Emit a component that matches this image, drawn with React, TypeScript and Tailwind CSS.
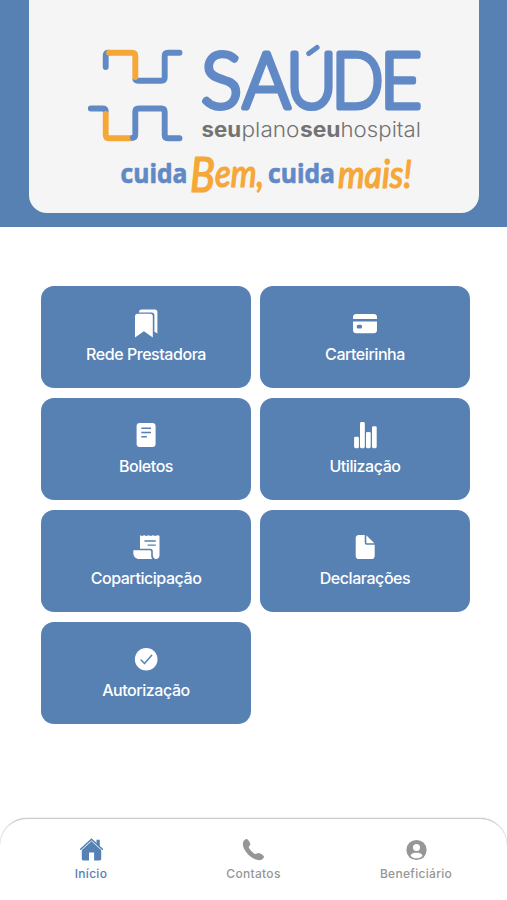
import type { ReactNode } from 'react'

interface MenuItem {
  label: string
  icon: ReactNode
}

interface TabItem {
  label: string
  icon: ReactNode
  active?: boolean
}

const menuItems: MenuItem[] = [
  {
    label: 'Rede Prestadora',
    icon: (
      <>
        <path d="M8 5.2C8 3.6 9.1 2.6 10.400 2.6H24c1.400 0 2.400 1 2.400 2.400V26.600l-3-1.800V8.400c0-1.600-1-2.800-2.800-2.800H8z" fill="white" />
        <path d="M4 9.200C4 7.700 5 6.800 6.400 6.800H19.400C20.900 6.800 21.800 7.700 21.800 9.200V30.600L12.900 24.200L4 30.600Z" fill="white" />
      </>
    ),
  },
  {
    label: 'Carteirinha',
    icon: (
      <>
        <path d="M3 11.900V10C3 8 4.400 7 6.100 7H23.900C25.600 7 27 8 27 10V11.900Z" fill="white" />
        <path
          fillRule="evenodd"
          d="M3 14.500H27V23.200C27 25 25.600 26.200 23.900 26.200H6.100C4.400 26.200 3 25 3 23.200ZM8.400 17.700C6.200 17.700 6.200 21.500 8.400 21.500H10.500C12.700 21.500 12.700 17.700 10.500 17.700Z"
          fill="white"
        />
      </>
    ),
  },
  {
    label: 'Boletos',
    icon: (
      <>
        <rect x="5.600" y="3.900" width="19" height="24.100" rx="3.200" fill="white" />
        <path d="M10.300 9.300H20M10.300 13.500H20M10.300 17.700H15.800" stroke="#5780b3" strokeWidth="1.500" />
      </>
    ),
  },
  {
    label: 'Utilização',
    icon: (
      <>
        <rect x="4.100" y="17.800" width="4.800" height="11.400" rx="1.400" fill="white" />
        <rect x="10" y="3" width="4.800" height="26.200" rx="1.400" fill="white" />
        <rect x="16" y="12.900" width="4.700" height="16.300" rx="1.400" fill="white" />
        <rect x="22" y="7.200" width="4.700" height="22" rx="1.400" fill="white" />
      </>
    ),
  },
  {
    label: 'Coparticipação',
    icon: (
      <>
        <path
          d="M9 4.200L11 5.100L13.200 4.200L15.400 5.100L17.600 4.200L19.800 5.100L22 4.200L24.200 5.100L26.400 4.200L28.500 4.800V24C28.500 26.800 27 28 25.200 28C23 28 21.800 26.500 21.800 24.100V20.200C21.800 18.600 20.900 17.700 19.200 17.700H9Z"
          fill="white"
        />
        <path d="M2.300 19.200H18.600C19.700 19.200 20.200 19.700 20.200 20.800V24.500C20.200 26.100 20.600 27.200 21.400 28H8.500C4.500 28 2.300 25.500 2.300 21.500Z" fill="white" />
        <path d="M13.500 10H24.800M16.600 14.100H24.800" stroke="#5780b3" strokeWidth="1.400" />
      </>
    ),
  },
  {
    label: 'Declarações',
    icon: (
      <>
        <path
          d="M14.700 4V11.200C14.700 13 15.600 13.800 17.300 13.800H24.700V24.900C24.700 26.900 23.400 28 21.500 28H8.900C7 28 5.700 26.900 5.700 24.900V7.100C5.700 5.100 7 4 8.900 4Z"
          fill="white"
        />
        <path d="M16.300 4.200L24.400 12.300H17.300C16.600 12.300 16.300 12 16.300 11.300Z" fill="white" />
      </>
    ),
  },
  {
    label: 'Autorização',
    icon: (
      <>
        <circle cx="15.200" cy="16.300" r="11.300" fill="white" />
        <path d="M10.100 17L13.500 20.600L20.700 12.300" fill="none" stroke="#5780b3" strokeWidth="1.500" strokeLinecap="round" strokeLinejoin="round" />
      </>
    ),
  },
]

const tabItems: TabItem[] = [
  {
    label: 'Início',
    active: true,
    icon: (
      <>
        <path d="M2.800 12.200L12.500 3.500L22.200 12.200V22C22.200 22.900 21.700 23.400 20.800 23.400H15.100V15.500H10V23.400H4.300C3.300 23.400 2.800 22.900 2.800 22Z" fill="currentColor" />
        <path d="M17.500 2.800H20.800V9.500L17.500 6.500Z" fill="currentColor" />
        <path d="M2.300 13.200L12.500 3.900L22.700 13.200" fill="none" stroke="white" strokeWidth="0.800" />
        <path d="M1.600 12.200L12.500 2.300L23.400 12.200" fill="none" stroke="currentColor" strokeWidth="1.500" strokeLinecap="round" />
      </>
    ),
  },
  {
    label: 'Contatos',
    icon: (
      <path
        d="M2.400 4.500C3.500 2.500 5.200 1.600 6.500 2.400C7.500 3 9.200 5.500 9.300 6.900C9.400 8.500 7.800 9 7.800 10.200C7.800 11.500 12.400 16.700 14.300 16.900C15.700 17 16.300 15.800 17.700 15.900C19.300 16 22.400 18.100 22.900 19.300C23.400 20.700 21.400 22.900 19.400 23.100C11.300 23.900 1.100 13.100 1.900 6.200C2 5.600 2.100 5.100 2.400 4.500Z"
        fill="currentColor"
      />
    ),
  },
  {
    label: 'Beneficiário',
    icon: (
      <>
        <circle cx="12.500" cy="13" r="10.100" fill="currentColor" />
        <circle cx="12.500" cy="10.600" r="3.500" fill="white" />
        <path d="M6.500 18.700C7.200 16.200 10 15.700 12.500 15.700S17.800 16.200 18.500 18.700C16.900 20.500 14.800 21.300 12.500 21.300S8.100 20.500 6.500 18.700Z" fill="white" />
      </>
    ),
  },
]

function Logo() {
  return (
    <svg className="block h-[212px] w-[450px]" viewBox="29 0 450 212" role="img" aria-label="Saúde">
      <defs>
        <clipPath id="cap-height">
          <path d="M195 48H300V57H324V48H430V115H195Z" />
        </clipPath>
      </defs>
      <g fill="none" strokeWidth="5.900" strokeLinecap="round" strokeLinejoin="round">
        <path d="M105.700 67V55.500Q105.700 52.700 108.500 52.700" stroke="#6189c6" />
        <path d="M135.500 79.500Q136 80.700 138.500 80.700H161.500Q164.700 80.700 164.700 77.500V56Q164.700 52.800 168 52.800H179.500" stroke="#6189c6" />
        <path d="M109 52.700H132Q135.300 52.700 135.300 56V77" stroke="#f5a737" />
        <path d="M90.800 108.500H102.500Q105.700 108.500 105.700 111.500" stroke="#6189c6" />
        <path d="M105.700 114V134.500Q105.700 138.300 109 138.300H131" stroke="#f5a737" />
        <path d="M133 137.800Q135.300 137.500 135.300 134V112Q135.300 108.500 138.600 108.500H161.300Q164.700 108.500 164.700 112V135Q164.700 138.300 168 138.300H179.500" stroke="#6189c6" />
      </g>
      <g clipPath="url(#cap-height)">
        <text
          y="108"
          fontSize="76"
          fill="#6189c6"
          stroke="#6189c6"
          strokeWidth="5"
          strokeLinejoin="round"
          className="font-['Lato'] font-light"
        >
          <tspan x="201" textLength="41" lengthAdjust="spacingAndGlyphs">S</tspan>
          <tspan x="242.500" textLength="48" lengthAdjust="spacingAndGlyphs">A</tspan>
          <tspan x="286" textLength="51" lengthAdjust="spacingAndGlyphs">Ú</tspan>
          <tspan x="331.500" textLength="52" lengthAdjust="spacingAndGlyphs">D</tspan>
          <tspan x="380" textLength="42" lengthAdjust="spacingAndGlyphs">E</tspan>
        </text>
      </g>
      {/* low accent that sits between the arms of the U */}
      <path d="M308.800 53.500L317 47.500" stroke="#6189c6" strokeWidth="5.200" strokeLinecap="round" />
      <g fontSize="20.500" fill="#737373" className="font-['Inter']">
        <text x="201.500" y="136.500" textLength="39.500" lengthAdjust="spacingAndGlyphs" className="font-bold">seu</text>
        <text x="241.500" y="136.500" textLength="58" lengthAdjust="spacingAndGlyphs" className="font-light">plano</text>
        <text x="300" y="136.500" textLength="40.500" lengthAdjust="spacingAndGlyphs" className="font-bold">seu</text>
        <text x="340.500" y="136.500" textLength="80.500" lengthAdjust="spacingAndGlyphs" className="font-light">hospital</text>
      </g>
      <g fontSize="27.500" fill="#6189c6" stroke="#6189c6" strokeWidth="0.700" strokeLinejoin="round" className="font-['Open_Sans'] font-bold">
        <text x="120.500" y="182.500" textLength="67" lengthAdjust="spacingAndGlyphs">cuida</text>
        <text x="268" y="182.500" textLength="67" lengthAdjust="spacingAndGlyphs">cuida</text>
      </g>
      <g fill="#f5a737" stroke="#f5a737" strokeWidth="1.200" strokeLinejoin="round" className="font-['Lato'] font-medium italic">
        <text x="190" y="192" textLength="74" lengthAdjust="spacingAndGlyphs">
          <tspan fontSize="48">B</tspan>
          <tspan fontSize="38" dy="-5">em,</tspan>
        </text>
        <text x="338" y="188" fontSize="38" textLength="74" lengthAdjust="spacingAndGlyphs">mais!</text>
      </g>
    </svg>
  )
}

export default function App() {
  return (
    <div className="flex h-[900px] w-[507px] flex-col overflow-hidden bg-white font-['Inter',sans-serif]">
      <header className="h-[227px] shrink-0 bg-[#5780b3] pl-[29px]">
        <div className="h-[212.500px] w-[450px] overflow-hidden rounded-b-[18px] bg-[#f5f5f5]">
          <Logo />
        </div>
      </header>

      <main className="grid grid-cols-[210px_210px] gap-x-[9px] gap-y-[10px] pt-[58.800px] pl-[41px]">
        {menuItems.map((item) => (
          <button
            key={item.label}
            type="button"
            className="flex h-[102px] flex-col items-center rounded-[13px] bg-[#5780b3] pt-[21px]"
          >
            <svg className="h-8 w-[30px]" viewBox="0 0 30 32">{item.icon}</svg>
            <span className="mt-[3.500px] text-base leading-6 font-medium tracking-[-0.45px] text-white">
              {item.label}
            </span>
          </button>
        ))}
      </main>

      <nav className="mt-auto grid h-[82px] shrink-0 grid-cols-[162.500px_162.500px_162.500px] justify-center rounded-t-[27px] border-t-[1.500px] border-[#cbcbcb] bg-white pt-[18px] shadow-[0_0_1.500px_#bbbbbb]">
        {tabItems.map((tab) => (
          <a
            key={tab.label}
            href="#"
            className={
              tab.active
                ? 'flex flex-col items-center text-[#5780b3]'
                : 'flex flex-col items-center text-[#969696]'
            }
          >
            <svg className="h-[26px] w-[25px]" viewBox="0 0 25 26">{tab.icon}</svg>
            <span className="mt-[3px] text-xs leading-4 font-medium tracking-[0.3px]">{tab.label}</span>
          </a>
        ))}
      </nav>
    </div>
  )
}
